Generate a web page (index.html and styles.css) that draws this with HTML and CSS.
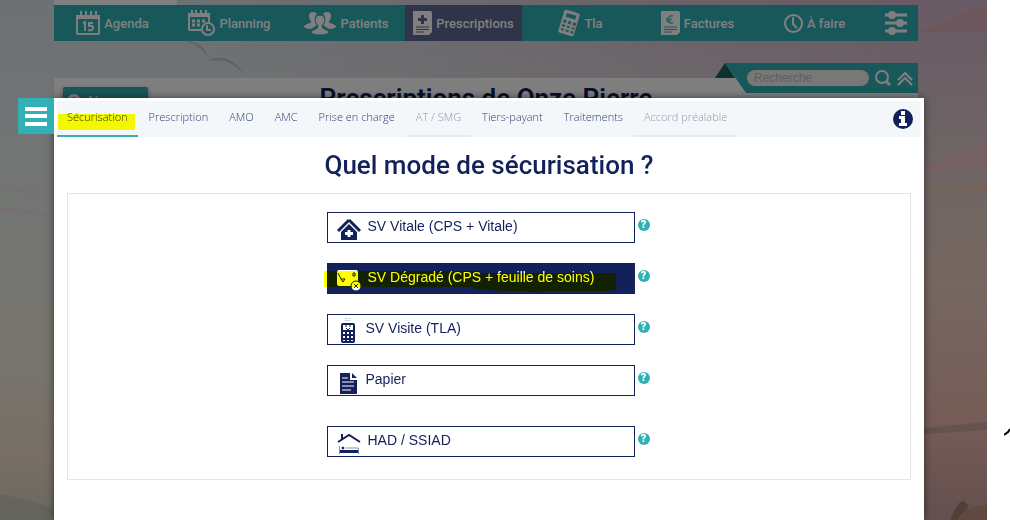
FILE: index.html
```html
<!DOCTYPE html>
<html lang="fr">
<head>
    <meta charset="UTF-8">
    <meta name="viewport" content="width=device-width, initial-scale=1.0">
    <title>Prescriptions</title>
    <link rel="stylesheet" href="styles.css">
</head>
<body>
    <div class="scene">
        <svg class="backdrop" viewBox="0 0 987 520" preserveAspectRatio="none" aria-hidden="true">
            <defs>
                <linearGradient id="sky-left" x1="0" y1="0" x2="0" y2="1">
                    <stop offset="0" stop-color="#d9e2ea"/>
                    <stop offset="0.3" stop-color="#e4ebe9"/>
                    <stop offset="0.65" stop-color="#eeebe0"/>
                    <stop offset="0.88" stop-color="#f0ddcc"/>
                    <stop offset="1" stop-color="#d8d2bf"/>
                </linearGradient>
                <linearGradient id="sky-right" x1="0" y1="0" x2="0" y2="1">
                    <stop offset="0" stop-color="#d2b6cc"/>
                    <stop offset="0.3" stop-color="#dccaca"/>
                    <stop offset="0.55" stop-color="#eccebf"/>
                    <stop offset="0.82" stop-color="#eab8ae"/>
                    <stop offset="1" stop-color="#c8a09e"/>
                </linearGradient>
                <linearGradient id="fade" x1="0" y1="0" x2="1" y2="0">
                    <stop offset="0.2" stop-color="#fff" stop-opacity="0"/>
                    <stop offset="0.9" stop-color="#fff"/>
                </linearGradient>
                <mask id="right-side"><rect width="987" height="520" fill="url(#fade)"/></mask>
            </defs>
            <rect width="987" height="520" fill="url(#sky-left)"/>
            <rect width="987" height="520" fill="url(#sky-right)" mask="url(#right-side)"/>
            <path d="M918 29C940 26 962 10 987 6V31L918 32Z" fill="#dba9ae" opacity=".6"/>
            <path d="M924 168C948 160 965 148 987 138V166L924 174Z" fill="#ffb9c4" opacity=".4"/>
            <path d="M924 187Q956 194 987 182V190Q956 196 924 191Z" fill="#f4c79c" opacity=".5"/>
            <path d="M0 186Q20 192 54 191V194Q20 194 0 189ZM0 207Q30 209 54 216V219Q30 213 0 211Z" fill="#f0dce6" opacity=".7"/>
            <path d="M0 494Q30 500 54 508V520H0Z" fill="#bcc2b2" opacity=".6"/>
            <path d="M924 428L987 422V430L924 434Z" fill="#b09a90" opacity=".6"/>
            <path d="M950 520Q958 500 964 501L969 506L958 520Z" fill="#9e7f72"/>
            <path d="M957 520Q965 506 987 505V520Z" fill="#c2937f"/>
            <path d="M186 41Q205 42 209 60Q230 52 243 73Q229 57 210 61Q203 46 186 41Z" fill="#c4c0c2"/>
        </svg>

        <div class="app">
            <div class="patient-strip"><span class="patient-tab"></span></div>
            <nav class="navbar">
                <a href="#" class="nav-item">
                    <svg width="24" height="24" viewBox="0 0 24 24" fill="none" stroke="currentColor">
                        <path d="M1 5H23V22Q23 23 22 23H2Q1 23 1 22Z" stroke-width="2"/>
                        <path d="M1 4H23V8H1Z" fill="currentColor" stroke="none"/>
                        <path d="M5 0V6M10 0V6M15 0V6M20 0V6" stroke-width="2"/>
                        <path d="M7 12L9 11V20M17 12H13V15Q17 14 17 17T12 19" stroke-width="2"/>
                    </svg>
                    Agenda
                </a>
                <a href="#" class="nav-item">
                    <svg width="27" height="26" viewBox="0 0 27 26" fill="none" stroke="currentColor">
                        <path d="M13 20H2Q1 20 1 19V4H21V12" stroke-width="2"/>
                        <path d="M1 3H21V7H1Z" fill="currentColor" stroke="none"/>
                        <path d="M4 0V5M8 0V5M13 0V5M18 0V5" stroke-width="2"/>
                        <path d="M4 11H7M9 11H12M14 11H17M4 15H7M9 15H12" stroke-width="3"/>
                        <circle cx="20" cy="19" r="6" stroke-width="2"/>
                        <path d="M19 15V20H23" stroke-width="2"/>
                    </svg>
                    Planning
                </a>
                <a href="#" class="nav-item">
                    <svg width="32" height="24" viewBox="0 0 32 24" fill="currentColor">
                        <path d="M5 5Q5 1 9 1Q12 1 13 3Q10 5 11 10Q12 13 13 14L7 18Q0 18 0 15Q2 13 6 12Q8 11 6 9Q5 7 5 5ZM27 5Q27 1 23 1Q20 1 19 3Q22 5 21 10Q20 13 19 14L25 18Q32 18 32 15Q30 13 26 12Q24 11 26 9Q27 7 27 5Z"/>
                        <path d="M16 4Q20 4 21 8Q21 12 18 15Q18 17 20 18Q25 19 25 22Q21 24 16 24T7 22Q7 19 12 18Q14 17 14 15Q11 12 11 8Q12 4 16 4Z" stroke="#33b0b5"/>
                    </svg>
                    Patients
                </a>
                <a href="#" class="nav-item active">
                    <svg width="19" height="24" viewBox="0 0 19 24">
                        <path d="M0 0H17Q19 0 19 2V21L16 24H0Z" fill="currentColor"/>
                        <path d="M9.500 4V13M5 8.500H14" stroke="#5e6890" stroke-width="3"/>
                        <path d="M3 16H16M3 18.500H16M3 21H11" stroke="#5e6890"/>
                    </svg>
                    Prescriptions
                </a>
                <a href="#" class="nav-item">
                    <svg width="22" height="26" viewBox="0 0 22 26">
                        <g transform="rotate(17 11 13)">
                            <rect x="3" y="1" width="16" height="24" rx="2" fill="currentColor"/>
                            <path d="M6 4H16V8H6ZM5 11H8V14H5ZM10 11H13V14H10ZM15 11H18V14H15ZM5 16H8V18H5ZM10 16H13V18H10ZM15 16H18V18H15ZM5 20H8V22H5ZM10 20H13V22H10ZM15 20H18V22H15Z" fill="#33b0b5"/>
                        </g>
                    </svg>
                    Tla
                </a>
                <a href="#" class="nav-item">
                    <svg width="19" height="24" viewBox="0 0 19 24" fill="none" stroke="#33b0b5">
                        <path d="M0 0H17Q19 0 19 2V21L16 24H0Z" fill="currentColor" stroke="none"/>
                        <path d="M12 5Q7 4 7 8.500T12 12M5 8H11M5 10H10" stroke-width="1.200"/>
                        <path d="M3 16H16M3 18.500H16M3 21H11"/>
                    </svg>
                    Factures
                </a>
                <a href="#" class="nav-item">
                    <svg width="19" height="19" viewBox="0 0 19 19" fill="none" stroke="currentColor" stroke-width="2">
                        <circle cx="9.500" cy="9.500" r="8.500"/>
                        <path d="M9 3V10L13 14"/>
                    </svg>
                    À faire
                </a>
                <a href="#" class="nav-item nav-settings" aria-label="Réglages">
                    <svg width="22" height="24" viewBox="0 0 22 24" fill="currentColor">
                        <path d="M0 4H22M0 12H22M0 20H22" stroke="currentColor" stroke-width="3"/>
                        <circle cx="7" cy="4" r="4"/><circle cx="15" cy="12" r="4"/><circle cx="7" cy="20" r="4"/>
                    </svg>
                </a>
            </nav>

            <div class="search-row">
                <svg width="32" height="30" viewBox="0 0 32 30" aria-hidden="true">
                    <path d="M0 15L10 0L20 15Z" fill="#1b6265"/>
                    <path d="M10 0H32V30H31Z" fill="#33b0b5"/>
                </svg>
                <form class="search">
                    <input type="search" placeholder="Recherche" aria-label="Recherche">
                    <button type="button" aria-label="Rechercher">
                        <svg width="16" height="16" viewBox="0 0 16 16" fill="none" stroke="currentColor" stroke-width="2">
                            <circle cx="7" cy="7" r="6"/><path d="M11 11L15 15" stroke-width="3"/>
                        </svg>
                    </button>
                    <button type="button" aria-label="Replier">
                        <svg width="16" height="16" viewBox="0 0 16 16" fill="none" stroke="currentColor" stroke-width="2">
                            <path d="M1 10L8 3L15 10M1 15L8 8L15 15"/>
                        </svg>
                    </button>
                </form>
            </div>

            <main class="page">
                <button type="button" class="btn-new">
                    <svg width="14" height="14" viewBox="0 0 14 14">
                        <circle cx="7" cy="7" r="7" fill="currentColor"/>
                        <path d="M7 3V11M3 7H11" stroke="#33b0b5" stroke-width="2"/>
                    </svg>
                    Nouveau
                </button>
                <h1>Prescriptions de Onze Pierre</h1>
            </main>
        </div>

        <div class="scrim"></div>

        <section class="modal" role="dialog" aria-labelledby="modal-title">
            <button type="button" class="menu-btn" aria-label="Menu">
                <svg width="22" height="20" viewBox="0 0 22 20">
                    <path d="M0 3H22M0 10H22M0 18H22" stroke="currentColor" stroke-width="4"/>
                </svg>
            </button>
            <div class="modal-bar">
                <div class="tabs">
                    <button type="button" class="tab active">Sécurisation</button>
                    <button type="button" class="tab">Prescription</button>
                    <button type="button" class="tab">AMO</button>
                    <button type="button" class="tab">AMC</button>
                    <button type="button" class="tab">Prise en charge</button>
                    <button type="button" class="tab" disabled>AT / SMG</button>
                    <button type="button" class="tab">Tiers-payant</button>
                    <button type="button" class="tab">Traitements</button>
                    <button type="button" class="tab" disabled>Accord préalable</button>
                </div>
                <button type="button" class="info-btn" aria-label="Informations">
                    <svg width="20" height="20" viewBox="0 0 20 20">
                        <circle cx="10" cy="10" r="10" fill="currentColor"/>
                        <path d="M8 2H12V6H8ZM6 7H12V14H14V17H6V14H8V10H6Z" fill="#fff"/>
                    </svg>
                </button>
            </div>

            <h2 id="modal-title">Quel mode de sécurisation ?</h2>

            <div class="modes">
                <div class="mode-row">
                    <button type="button" class="mode">
                        <svg width="24" height="22" viewBox="0 0 24 22">
                            <path d="M12 2L1 13M12 2L23 13" stroke="currentColor" stroke-width="3"/>
                            <path d="M12 6L20 14V22H4V14Z" fill="currentColor"/>
                            <path d="M12 12V19M8 15.500H16" stroke="#fff" stroke-width="3"/>
                        </svg>
                        <span>SV Vitale (CPS + Vitale)</span>
                    </button>
                    <button type="button" class="help" aria-label="Aide SV Vitale">?</button>
                </div>
                <div class="mode-row">
                    <button type="button" class="mode selected">
                        <svg width="24" height="22" viewBox="0 0 24 22">
                            <rect y="1" width="21" height="16" rx="2" fill="currentColor"/>
                            <path d="M16 4H18V7H16ZM1 4L4 10H8L6 13L4 10" fill="none" stroke="#12215a"/>
                            <circle cx="19" cy="17" r="5" fill="#fff" stroke="#12215a"/>
                            <path d="M17 15L21 19M21 15L17 19" stroke="#12215a"/>
                        </svg>
                        <span>SV Dégradé (CPS + feuille de soins)</span>
                    </button>
                    <button type="button" class="help" aria-label="Aide SV Dégradé">?</button>
                    <svg class="marker" viewBox="0 0 292 21" preserveAspectRatio="none" aria-hidden="true">
                        <path d="M0 0H155V2H292V19H285V20H215V21H205V20H180L150 18V16H0Z" fill="#ff0"/>
                    </svg>
                </div>
                <div class="mode-row">
                    <button type="button" class="mode narrow">
                        <svg width="22" height="26" viewBox="0 0 22 26">
                            <path d="M9 0V4M12 0V4" stroke="#8890ad" stroke-dasharray="1 1"/>
                            <rect x="4" y="5" width="14" height="20" rx="2" fill="currentColor"/>
                            <path d="M6 7H16V12H6ZM6 14H8V16H6ZM10 14H12V16H10ZM14 14H16V16H14ZM6 18H8V20H6ZM10 18H12V20H10ZM14 18H16V20H14ZM6 22H8V23H6ZM10 22H12V23H10ZM14 22H16V23H14Z" fill="#fff"/>
                            <path d="M8 8H10M12 8H14M9 10L11 12L13 10" fill="none" stroke="currentColor"/>
                        </svg>
                        <span>SV Visite (TLA)</span>
                    </button>
                    <button type="button" class="help" aria-label="Aide SV Visite">?</button>
                </div>
                <div class="mode-row">
                    <button type="button" class="mode narrow">
                        <svg width="22" height="25" viewBox="0 0 22 25">
                            <path d="M3 4H13V11H20V25H3ZM15 4L20 9H15Z" fill="currentColor"/>
                            <path d="M5 9H11M5 13H17M5 17H17M5 21H14" stroke="#fff"/>
                        </svg>
                        <span>Papier</span>
                    </button>
                    <button type="button" class="help" aria-label="Aide Papier">?</button>
                </div>
                <div class="mode-row apart">
                    <button type="button" class="mode">
                        <svg width="24" height="22" viewBox="0 0 24 22" fill="none" stroke="currentColor">
                            <path d="M1 10L12 3L23 10M5 2V7" stroke-width="2"/>
                            <path d="M2.500 14V22M21.500 16V22" stroke="#8890ad"/>
                            <path d="M3 19.500H21" stroke-width="3"/>
                            <path d="M9 16H21" stroke="#8890ad"/>
                            <circle cx="6" cy="16" r="1" fill="currentColor"/>
                        </svg>
                        <span>HAD / SSIAD</span>
                    </button>
                    <button type="button" class="help" aria-label="Aide HAD / SSIAD">?</button>
                </div>
            </div>
        </section>
    </div>
    <svg class="pen-mark" width="6" height="9" viewBox="0 0 6 9" aria-hidden="true">
        <path d="M0 7L4 4L6 1" fill="none" stroke="#000" stroke-width="2"/>
    </svg>
</body>
</html>
```

FILE: styles.css
```css
* {
    margin: 0;
    padding: 0;
    box-sizing: border-box;
}

body {
    background: #fff;
    color: #12215a;
    font-family: 'Roboto', sans-serif;
    position: relative;
    overflow: hidden;
}

button {
    border: none;
    background: none;
    color: inherit;
    font-family: inherit;
    cursor: pointer;
}

svg {
    display: block;
    flex-shrink: 0;
}

.scene {
    position: relative;
    margin-right: 23px;
    min-height: 100vh;
    overflow: hidden;
}

.backdrop {
    position: absolute;
    width: 100%;
    height: 100%;
}

.app {
    position: relative;
    z-index: 0;
    min-height: 100vh;
    margin: 0 69px 0 54px;
    display: flex;
    flex-direction: column;
}

.patient-strip {
    height: 5px;
    display: flex;
}

.patient-tab {
    width: 123px;
    background: #fff;
}

/* main navigation */
.navbar {
    display: flex;
    height: 36px;
    background: #33b0b5;
}

.nav-item {
    flex: 1;
    display: flex;
    align-items: center;
    justify-content: center;
    gap: 4px;
    color: #fff;
    font-size: 13px;
    font-weight: 500;
    text-decoration: none;
    white-space: nowrap;
}

.nav-item.active {
    background: #5e6890;
}

.nav-settings {
    flex: 0 0 45px;
}

/* search ribbon, overlaps the top of the page panel */
.search-row {
    display: flex;
    justify-content: flex-end;
    margin-top: 22px;
    margin-bottom: -15px;
    z-index: 1;
}

.search {
    display: flex;
    align-items: center;
    gap: 6px;
    height: 30px;
    padding-right: 5px;
    background: #33b0b5;
}

.search input {
    width: 122px;
    height: 16px;
    padding: 0 7px;
    border: none;
    border-radius: 8px;
    background: #f0f0ec;
    font-family: 'Liberation Sans', sans-serif;
    font-size: 12px;
}

.search input::placeholder {
    color: #c0c0c0;
}

.search button {
    color: #fff;
}

.page {
    flex: 1;
    padding: 9px;
    background: #fff;
}

.page h1 {
    margin-top: -34px;
    text-align: center;
    font-size: 26px;
    font-weight: 600;
    line-height: 36px;
}

.btn-new {
    display: flex;
    align-items: center;
    gap: 7px;
    height: 27px;
    padding: 0 4px;
    border-radius: 2px;
    background: #33b0b5;
    color: #fff;
    font-family: 'Liberation Sans', sans-serif;
    font-size: 14px;
    box-shadow: 0 2px 5px rgba(0, 0, 0, 0.4);
}

.scrim {
    position: absolute;
    inset: 0;
    background: rgba(0, 0, 0, 0.5);
}

/* dialog */
.modal {
    position: absolute;
    top: 98px;
    right: 63px;
    bottom: 0;
    left: 54px;
    padding: 3px;
    background: #fff;
    box-shadow: 0 0 8px rgba(0, 0, 0, 0.5);
    z-index: 2;
}

.menu-btn {
    position: absolute;
    top: 0;
    right: 100%;
    width: 36px;
    height: 36px;
    display: flex;
    align-items: center;
    justify-content: center;
    background: #33b0b5;
    color: #fff;
}

.modal-bar {
    display: flex;
    align-items: center;
    justify-content: space-between;
    height: 36px;
    padding-right: 8px;
    background: #f3f7f9;
}

.tabs {
    display: flex;
    gap: 1px;
    height: 100%;
}

.tab {
    position: relative;
    padding: 0 10px 4px;
    border-bottom: 2px solid transparent;
    color: #2f3d70;
    font-family: 'Open Sans', sans-serif;
    font-size: 11px;
    font-weight: 300;
    white-space: nowrap;
}

.tab.active {
    border-bottom-color: #33b0b5;
}

.tab.active::after {
    content: "";
    position: absolute;
    top: 13px;
    right: 3px;
    left: 1px;
    height: 16px;
    background: #ff0;
    mix-blend-mode: multiply;
}

.tab:disabled {
    border-bottom-color: #e8eaec;
    color: #8f97b3;
}

.modal h2 {
    margin: 10px 0;
    text-align: center;
    font-size: 26px;
    font-weight: 500;
    line-height: 36px;
}

.modes {
    display: flex;
    flex-direction: column;
    align-items: center;
    gap: 20px;
    margin: 0 10px;
    padding: 18px 2px 22px 0;
    border: 1px solid #e5e5e5;
}

.mode-row {
    position: relative;
    display: flex;
    gap: 3px;
}

.mode-row.apart {
    margin-top: 10px;
}

.mode {
    display: flex;
    align-items: flex-start;
    gap: 7px;
    width: 308px;
    height: 31px;
    padding: 5px 9px 0;
    border: 1px solid #12215a;
    background: #fff;
    font-family: 'Liberation Sans', sans-serif;
    font-size: 14px;
    line-height: 16px;
    text-align: left;
}

.mode.narrow {
    padding-top: 3px;
}

.mode.narrow span {
    padding-top: 2px;
}

.mode.selected {
    background: #12215a;
    color: #fff;
}

.help {
    width: 12px;
    height: 12px;
    margin-top: 7px;
    border-radius: 50%;
    background: #33b0b5;
    color: #fff;
    font-size: 11px;
    font-weight: 900;
    line-height: 12px;
}

.marker {
    position: absolute;
    top: 8px;
    left: -3px;
    width: 292px;
    height: 21px;
    mix-blend-mode: multiply;
    pointer-events: none;
}

.pen-mark {
    position: absolute;
    top: 428px;
    right: 0;
}
```
